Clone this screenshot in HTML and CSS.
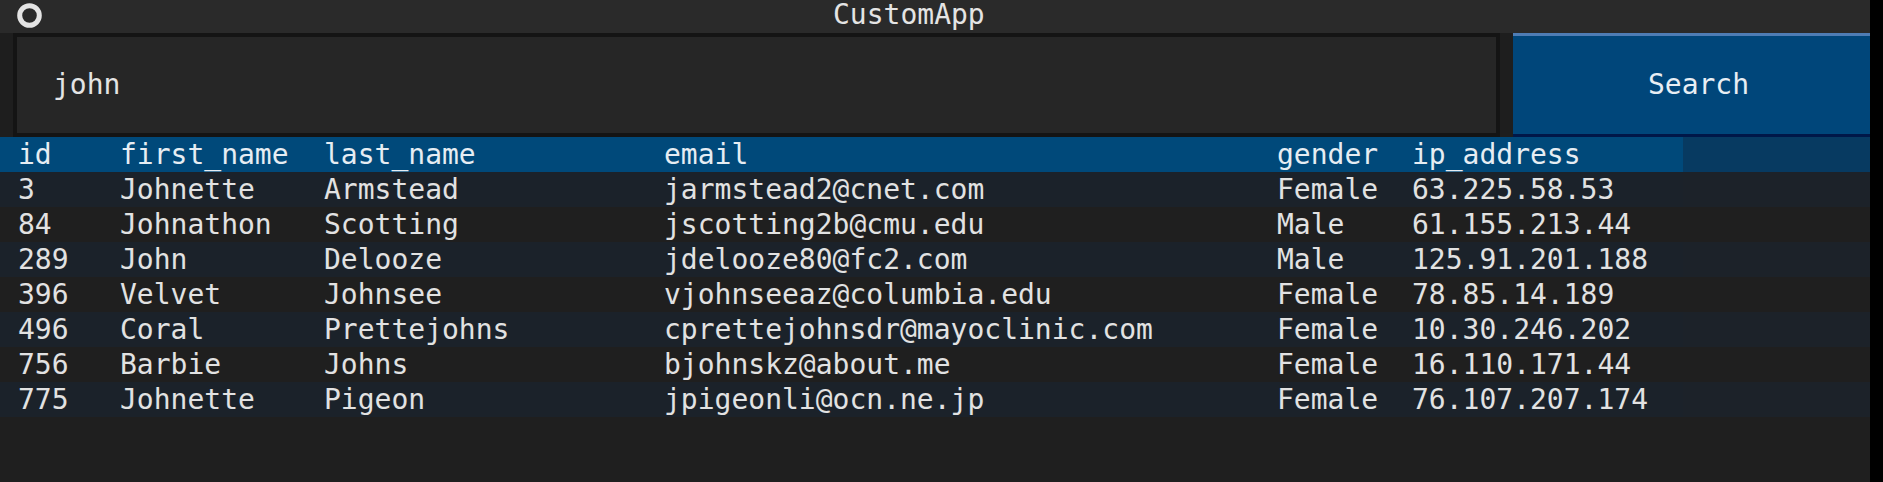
FILE: index.html
```html
<!DOCTYPE html>
<html lang="en">
<head>
<meta charset="utf-8">
<title>CustomApp</title>
<link rel="stylesheet" href="styles.css">
</head>
<body>
<div class="app">
  <div class="main">
    <div class="titlebar">
      <svg class="app-icon" width="25" height="25" viewBox="0 0 25 25"><circle cx="12.5" cy="12.5" r="9.8" fill="none" stroke="#e4e4e4" stroke-width="5"/></svg>
      <span class="title">CustomApp</span>
    </div>
    <div class="searchrow">
      <div class="search-input">john</div>
      <div class="search-btn">Search</div>
    </div>
    <div class="table">
      <div class="row head"><div class="cells"><span>id</span><span>first_name</span><span>last_name</span><span>email</span><span>gender</span><span>ip_address</span></div><div class="fill"></div></div>
      <div class="row odd"><div class="cells"><span>3</span><span>Johnette</span><span>Armstead</span><span>jarmstead2@cnet.com</span><span>Female</span><span>63.225.58.53</span></div><div class="fill"></div></div>
      <div class="row even"><div class="cells"><span>84</span><span>Johnathon</span><span>Scotting</span><span>jscotting2b@cmu.edu</span><span>Male</span><span>61.155.213.44</span></div><div class="fill"></div></div>
      <div class="row odd"><div class="cells"><span>289</span><span>John</span><span>Delooze</span><span>jdelooze80@fc2.com</span><span>Male</span><span>125.91.201.188</span></div><div class="fill"></div></div>
      <div class="row even"><div class="cells"><span>396</span><span>Velvet</span><span>Johnsee</span><span>vjohnseeaz@columbia.edu</span><span>Female</span><span>78.85.14.189</span></div><div class="fill"></div></div>
      <div class="row odd"><div class="cells"><span>496</span><span>Coral</span><span>Prettejohns</span><span>cprettejohnsdr@mayoclinic.com</span><span>Female</span><span>10.30.246.202</span></div><div class="fill"></div></div>
      <div class="row even"><div class="cells"><span>756</span><span>Barbie</span><span>Johns</span><span>bjohnskz@about.me</span><span>Female</span><span>16.110.171.44</span></div><div class="fill"></div></div>
      <div class="row odd"><div class="cells"><span>775</span><span>Johnette</span><span>Pigeon</span><span>jpigeonli@ocn.ne.jp</span><span>Female</span><span>76.107.207.174</span></div><div class="fill"></div></div>
    </div>
  </div>
  <div class="edge"></div>
</div>
</body>
</html>
```

FILE: styles.css
```css
html, body {
  margin: 0;
  padding: 0;
}
body {
  width: 1883px;
  height: 482px;
  overflow: hidden;
  background: #1f1f1f;
  color: #e2e2e2;
  font-family: "DejaVu Sans Mono", "Liberation Mono", monospace;
  font-size: 28px;
}
.app {
  display: flex;
  height: 482px;
}
.main {
  flex: 1;
  display: flex;
  flex-direction: column;
  min-width: 0;
}
.edge {
  width: 13px;
  background: #000;
}
.titlebar {
  height: 33px;
  background: #2a2a2a;
  display: flex;
  align-items: flex-start;
  padding-left: 17px;
}
.app-icon {
  margin-top: 3px;
  flex: none;
}
.title {
  margin-left: 791px;
  line-height: 29px;
  color: #e4e4e4;
  white-space: pre;
}
.searchrow {
  height: 104px;
  display: flex;
  gap: 13px;
  padding-left: 13px;
  background: #1e1e1e;
}
.search-input {
  width: 1487px;
  box-sizing: border-box;
  border: 4px solid #141414;
  background: #262626;
  padding-left: 36px;
  line-height: 96px;
  color: #e4e4e4;
}
.search-btn {
  flex: 1;
  box-sizing: border-box;
  border-top: 3px solid #4f7db5;
  border-bottom: 3px solid #001748;
  background: #00467a;
  text-align: center;
  padding-left: 14px;
  line-height: 98px;
  color: #e8eef4;
}
.table {
  display: flex;
  flex-direction: column;
}
.row {
  display: flex;
  height: 35px;
  line-height: 35px;
}
.cells {
  width: 1683px;
  box-sizing: border-box;
  padding-left: 18px;
  display: grid;
  grid-template-columns: 102px 204px 340px 613px 135px 271px;
  white-space: pre;
}
.fill {
  flex: 1;
}
.head .cells {
  background: #00497a;
  color: #e6edf3;
}
.head .fill {
  background: #073a61;
}
.odd .cells {
  background: #1b222a;
}
.odd .fill {
  background: #1c2229;
}
.even .cells,
.even .fill {
  background: #1f1f1f;
}
```
